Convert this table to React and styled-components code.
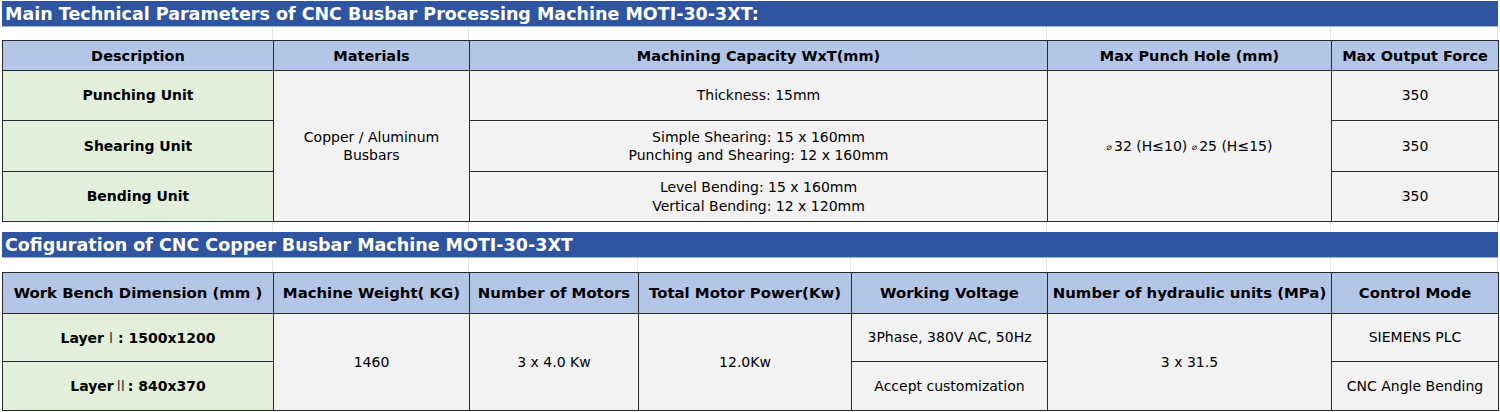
import styled, { createGlobalStyle } from 'styled-components';

const GlobalStyle = createGlobalStyle`
  html, body {
    margin: 0;
    padding: 0;
    background: #ffffff;
  }
`;

const Page = styled.div`
  width: 1496px;
  padding: 1px 2px 0 2px;
  font-family: 'DejaVu Sans', Verdana, sans-serif;
  color: #000;
`;

const TitleBar = styled.div`
  height: 26px;
  background: #2f54a0;
  color: #fff;
  font-family: 'DejaVu Sans', Verdana, sans-serif;
  font-weight: bold;
  font-size: 17.5px;
  line-height: 26px;
  padding-left: 3px;
  white-space: nowrap;
  overflow: hidden;
  box-shadow: inset 0 -1px 0 #9fb3d9;
`;

const GridGap = styled.div`
  display: flex;
  height: ${(p) => p.$h}px;
`;

const GridCell = styled.div`
  flex: 0 0 ${(p) => p.$w}px;
  border-right: 1px solid #e6e6e6;
  box-sizing: border-box;
`;

const Table = styled.table`
  width: 1496px;
  border-collapse: collapse;
  table-layout: fixed;
`;

const Th = styled.th`
  background: #b4c6e7;
  border: 1px solid #2a2a2a;
  height: ${(p) => p.$h}px;
  padding: 0;
  font-family: 'DejaVu Sans', Verdana, sans-serif;
  font-size: ${(p) => (p.$big ? '14.9px' : '14.5px')};
  font-weight: bold;
  text-align: center;
  white-space: nowrap;
  overflow: hidden;
`;

const Td = styled.td`
  background: ${(p) => (p.$label ? '#e2efda' : '#f2f2f2')};
  border: 1px solid #2a2a2a;
  height: ${(p) => p.$h}px;
  padding: 0;
  text-align: center;
  vertical-align: middle;
  font-family: 'DejaVu Sans', Verdana, 'Noto Sans CJK SC', sans-serif;
  font-size: 14px;
  font-weight: ${(p) => (p.$label ? 'bold' : 'normal')};
  line-height: 1.3;
  white-space: nowrap;
`;

const Dia = styled.span`
  font-size: 9px;
  vertical-align: 1px;
  margin-right: 2px;
`;

const Roman = styled.span`
  font-family: 'Noto Sans CJK SC', sans-serif;
  font-weight: normal;
  color: #3a3a3a;
`;

const cols1 = [271, 196, 578, 284, 167];
const cols2 = [271, 196, 169, 213, 196, 284, 167];

const Gap = ({ h, cols }) => (
  <GridGap $h={h}>
    {cols.map((w, i) => (
      <GridCell key={i} $w={w} />
    ))}
  </GridGap>
);

const App = () => {
  return (
    <Page>
      <GlobalStyle />
      <TitleBar>Main Technical Parameters of CNC Busbar Processing Machine MOTI-30-3XT:</TitleBar>
      <Gap h={13} cols={cols1} />
      <Table>
        <colgroup>
          {cols1.map((w, i) => (
            <col key={i} style={{ width: w }} />
          ))}
        </colgroup>
        <thead>
          <tr>
            <Th $h={29}>Description</Th>
            <Th $h={29}>Materials</Th>
            <Th $h={29}>Machining Capacity WxT(mm)</Th>
            <Th $h={29}>Max Punch Hole (mm)</Th>
            <Th $h={29}>Max Output Force</Th>
          </tr>
        </thead>
        <tbody>
          <tr>
            <Td $h={49} $label>Punching Unit</Td>
            <Td rowSpan={3}>
              Copper / Aluminum
              <br />
              Busbars
            </Td>
            <Td $h={49}>Thickness: 15mm</Td>
            <Td rowSpan={3}>
              <Dia>⌀</Dia>32 (H≤10) <Dia>⌀</Dia>25 (H≤15)
            </Td>
            <Td $h={49}>350</Td>
          </tr>
          <tr>
            <Td $h={50} $label>Shearing Unit</Td>
            <Td $h={50}>
              Simple Shearing: 15 x 160mm
              <br />
              Punching and Shearing: 12 x 160mm
            </Td>
            <Td $h={50}>350</Td>
          </tr>
          <tr>
            <Td $h={49} $label>Bending Unit</Td>
            <Td $h={49}>
              Level Bending: 15 x 160mm
              <br />
              Vertical Bending: 12 x 120mm
            </Td>
            <Td $h={49}>350</Td>
          </tr>
        </tbody>
      </Table>
      <Gap h={10} cols={cols1} />
      <TitleBar>Cofiguration of CNC Copper Busbar Machine MOTI-30-3XT</TitleBar>
      <Gap h={14} cols={cols2} />
      <Table>
        <colgroup>
          {cols2.map((w, i) => (
            <col key={i} style={{ width: w }} />
          ))}
        </colgroup>
        <thead>
          <tr>
            <Th $h={40} $big>Work Bench Dimension (mm )</Th>
            <Th $h={40} $big>Machine Weight( KG)</Th>
            <Th $h={40} $big>Number of Motors</Th>
            <Th $h={40} $big>Total Motor Power(Kw)</Th>
            <Th $h={40} $big>Working Voltage</Th>
            <Th $h={40} $big>Number of hydraulic units (MPa)</Th>
            <Th $h={40} $big>Control Mode</Th>
          </tr>
        </thead>
        <tbody>
          <tr>
            <Td $h={47} $label>
              Layer<Roman>Ⅰ</Roman>: 1500x1200
            </Td>
            <Td rowSpan={2}>1460</Td>
            <Td rowSpan={2}>3 x 4.0 Kw</Td>
            <Td rowSpan={2}>12.0Kw</Td>
            <Td $h={47}>3Phase, 380V AC, 50Hz</Td>
            <Td rowSpan={2}>3 x 31.5</Td>
            <Td $h={47}>SIEMENS PLC</Td>
          </tr>
          <tr>
            <Td $h={48} $label>
              Layer<Roman>Ⅱ</Roman>: 840x370
            </Td>
            <Td $h={48}>Accept customization</Td>
            <Td $h={48}>CNC Angle Bending</Td>
          </tr>
        </tbody>
      </Table>
    </Page>
  );
};

export default App;
